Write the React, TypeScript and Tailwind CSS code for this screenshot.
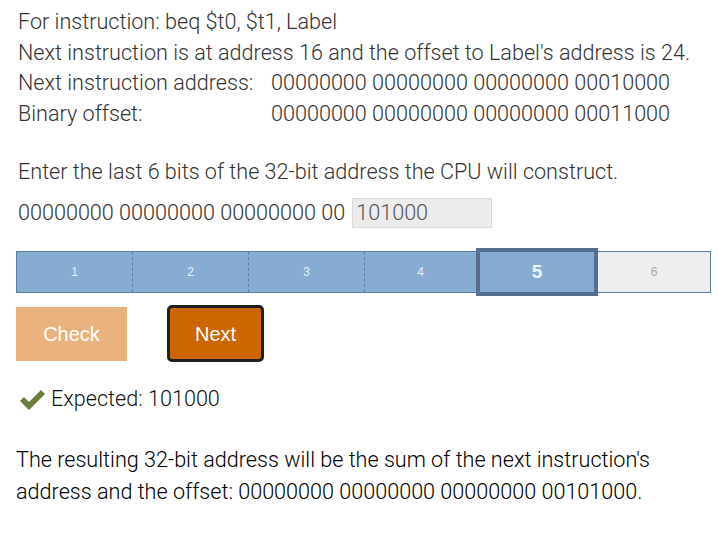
import { useState } from 'react';

const segments = [1, 2, 3, 4, 5, 6];

function CheckMark() {
  return (
    <svg width="28" height="24" viewBox="0 0 28 24" className="shrink-0">
      <path d="M2 13 L6 9 L11 14 L23 2 L27 6 L11 22 Z" fill="#6b7d3a" />
    </svg>
  );
}

const widths = ['w-[116px]', 'w-[116px]', 'w-[116px]', 'w-[111px]', 'w-[122px]', 'flex-1'];

export default function App() {
  const [value, setValue] = useState('101000');
  const current = 5;

  return (
    <div className="w-[718px] h-[546px] bg-white font-['Roboto',sans-serif] pl-[18px] pr-2 pt-[7px]">
      {/* Problem statement */}
      <div className="text-[21.6px] leading-[30.5px] font-light text-[#333]">
        <div>For instruction: beq $t0, $t1, Label</div>
        <div>Next instruction is at address 16 and the offset to Label's address is 24.</div>
        <div className="flex">
          <span className="w-[253px]">Next instruction address:</span>
          <span>00000000 00000000 00000000 00010000</span>
        </div>
        <div className="flex">
          <span className="w-[253px]">Binary offset:</span>
          <span>00000000 00000000 00000000 00011000</span>
        </div>
      </div>

      <div className="mt-[28px] text-[21.6px] leading-[30px] font-light text-[#333]">
        Enter the last 6 bits of the 32-bit address the CPU will construct.
      </div>
      <div className="mt-[10px] flex items-center text-[21.6px] font-light text-[#333]">
        <span>00000000 00000000 00000000 00</span>
        <input
          value={value}
          onChange={(e) => setValue(e.target.value)}
          className="ml-[7px] w-[140px] h-[30px] px-[3px] bg-[#ececec] border border-[#d9d9d9] text-[21.6px] font-light text-[#555] outline-none"
        />
      </div>

      {/* Progress segments */}
      <div className="mt-[22px] -ml-[2px] w-[695px] h-[42px] flex border border-[#5b7fa6] relative">
        {segments.map((n, i) => {
          const done = n <= current;
          const isCurrent = n === current;
          return (
            <div
              key={n}
              className={
                'flex items-center justify-center ' +
                widths[i] +
                ' ' +
                (done ? 'bg-[#87acd3] ' : 'bg-[#eeeeee] ') +
                (i < 3 ? 'border-r border-dashed border-[#5b7fa6] ' : '') +
                (isCurrent ? 'relative -my-[4px] border-[4px] border-solid border-[#566d8f] z-10' : '')
              }
            >
              <span
                className={
                  isCurrent
                    ? "font-['Liberation_Sans',sans-serif] font-bold text-[19px] text-[#eef3f8]"
                    : "font-['Liberation_Sans',sans-serif] text-[12px] " + (done ? 'text-[#e6eef6]' : 'text-[#a8a8a8]')
                }
              >
                {n}
              </span>
            </div>
          );
        })}
      </div>

      {/* Buttons */}
      <div className="mt-[12px] -ml-[2px] flex items-center gap-[40px] font-['Liberation_Sans',sans-serif] text-[20px] text-white">
        <button className="w-[111px] h-[54px] bg-[#e8b17e]">Check</button>
        <button className="w-[97px] h-[57px] bg-[#cc6600] border-[3px] border-[#1f1f1f] rounded-[5px]">Next</button>
      </div>

      <div className="mt-[21px] flex items-center gap-[5px] text-[21.6px] font-light text-[#111]">
        <CheckMark />
        <span>Expected: 101000</span>
      </div>

      <div className="mt-[28px] -ml-[2px] w-[660px] text-[21.6px] leading-[32px] font-light text-black">
        The resulting 32-bit address will be the sum of the next instruction's address and the offset: 00000000
        00000000 00000000 00101000.
      </div>
    </div>
  );
}
